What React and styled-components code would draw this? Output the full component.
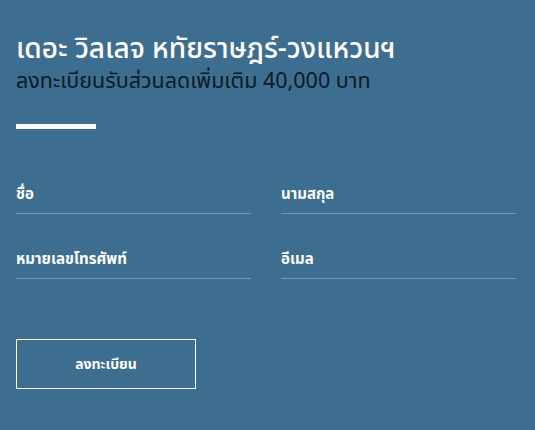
import React from "react";
import styled, { createGlobalStyle } from "styled-components";

const Global = createGlobalStyle`
  html, body { margin: 0; padding: 0; background: #3d6e8f; }
  body { font-family: "Noto Sans Thai", "Noto Sans Thai UI", "Noto Sans", "Liberation Sans", sans-serif; }
`;

const Page = styled.div`
  width: 535px;
  height: 430px;
  box-sizing: border-box;
  background: #3d6e8f;
  padding: 32px 19px 0 16px;
  overflow: hidden;
`;

const Title = styled.h1`
  margin: 0;
  color: #ffffff;
  font-size: 28px;
  font-weight: 500;
  line-height: 36px;
`;

const Subtitle = styled.h2`
  margin: 0;
  color: #0b1b29;
  font-size: 21.5px;
  font-weight: 400;
  line-height: 28px;
`;

const Bar = styled.div`
  width: 80px;
  height: 5px;
  background: #ffffff;
  margin-top: 28px;
`;

const Form = styled.form`
  display: grid;
  grid-template-columns: 235px 235px;
  column-gap: 30px;
  row-gap: 30px;
  margin-top: 50px;
`;

const Field = styled.label`
  display: block;
  border-bottom: 1px solid #6a9cc0;
  padding: 2px 0 4px;
  color: #ffffff;
  font-size: 15px;
  font-weight: 700;
  line-height: 28px;
`;

const Button = styled.button`
  display: block;
  margin-top: 60px;
  width: 180px;
  height: 50px;
  background: transparent;
  border: 1px solid #ffffff;
  color: #ffffff;
  font-family: inherit;
  font-size: 14px;
  font-weight: 700;
  cursor: pointer;
`;

export default function App() {
  return (
    <Page>
      <Global />
      <Title>เดอะ วิลเลจ หทัยราษฎร์-วงแหวนฯ</Title>
      <Subtitle>ลงทะเบียนรับส่วนลดเพิ่มเติม 40,000 บาท</Subtitle>
      <Bar />
      <Form onSubmit={(e) => e.preventDefault()}>
        <Field>ชื่อ</Field>
        <Field>นามสกุล</Field>
        <Field>หมายเลขโทรศัพท์</Field>
        <Field>อีเมล</Field>
      </Form>
      <Button type="button">ลงทะเบียน</Button>
    </Page>
  );
}
